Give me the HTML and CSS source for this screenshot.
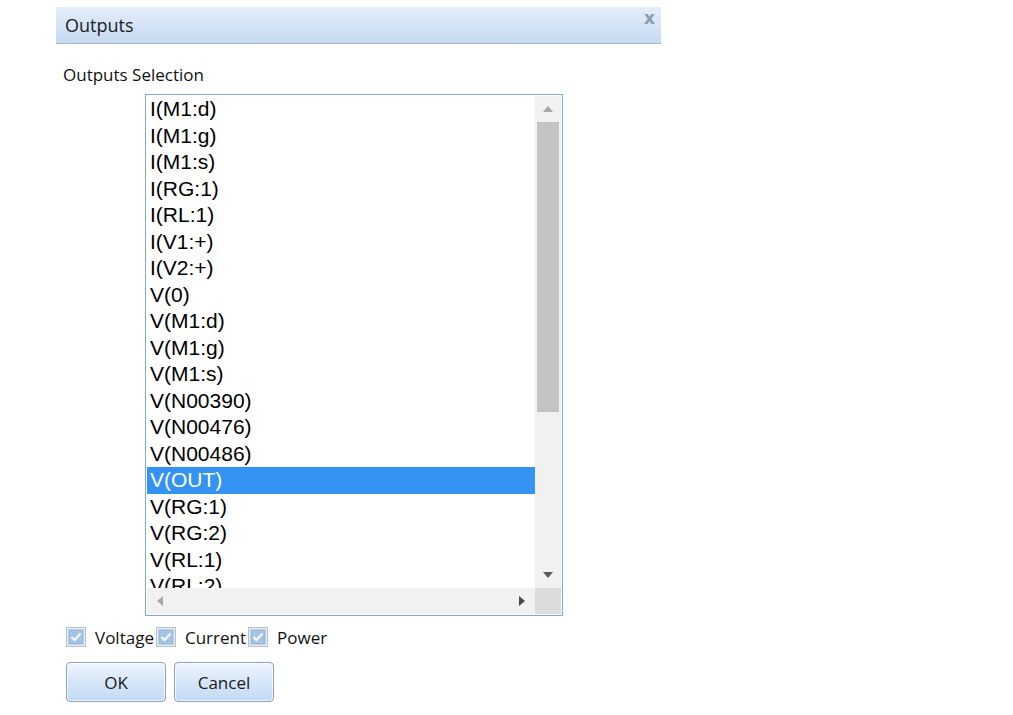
FILE: index.html
```html
<!DOCTYPE html>
<html>
<head>
<meta charset="utf-8">
<link rel="stylesheet" href="styles.css">
</head>
<body>
<div class="dialog">
  <div class="titlebar">
    <span class="title">Outputs</span>
    <span class="close">x</span>
  </div>
  <div class="content">
    <div class="label">Outputs Selection</div>
    <div class="listbox">
      <div class="items">
        <div class="item">I(M1:d)</div>
        <div class="item">I(M1:g)</div>
        <div class="item">I(M1:s)</div>
        <div class="item">I(RG:1)</div>
        <div class="item">I(RL:1)</div>
        <div class="item">I(V1:+)</div>
        <div class="item">I(V2:+)</div>
        <div class="item">V(0)</div>
        <div class="item">V(M1:d)</div>
        <div class="item">V(M1:g)</div>
        <div class="item">V(M1:s)</div>
        <div class="item">V(N00390)</div>
        <div class="item">V(N00476)</div>
        <div class="item">V(N00486)</div>
        <div class="item selected">V(OUT)</div>
        <div class="item">V(RG:1)</div>
        <div class="item">V(RG:2)</div>
        <div class="item">V(RL:1)</div>
        <div class="item">V(RL:2)</div>
      </div>
      <div class="vscroll">
        <div class="sbtn"><svg width="10" height="6" viewBox="0 0 10 6"><path d="M0 6 L5 0 L10 6 Z" fill="#a7a7a7"/></svg></div>
        <div class="vtrack"><div class="vthumb"></div></div>
        <div class="sbtn"><svg width="10" height="6" viewBox="0 0 10 6"><path d="M0 0 L5 6 L10 0 Z" fill="#5a5a5a"/></svg></div>
      </div>
      <div class="hscroll">
        <div class="sbtn"><svg width="6" height="10" viewBox="0 0 6 10"><path d="M6 0 L0 5 L6 10 Z" fill="#a7a7a7"/></svg></div>
        <div class="htrack"></div>
        <div class="sbtn"><svg width="6" height="10" viewBox="0 0 6 10"><path d="M0 0 L6 5 L0 10 Z" fill="#4a4a4a"/></svg></div>
      </div>
      <div class="corner"></div>
    </div>
    <div class="checks">
      <label class="check"><svg class="cb" width="20" height="20" viewBox="0 0 20 20"><rect x="0.5" y="0.5" width="19" height="19" fill="#e9eef4" stroke="#b4bfcc"/><rect x="3" y="3" width="14" height="14" fill="#a4c4e6" stroke="#8fb2d8"/><path d="M5.5 10 L8.5 13 L14.5 6.5" fill="none" stroke="#f4f8fc" stroke-width="2.4"/></svg><span>Voltage</span></label>
      <label class="check"><svg class="cb" width="20" height="20" viewBox="0 0 20 20"><rect x="0.5" y="0.5" width="19" height="19" fill="#e9eef4" stroke="#b4bfcc"/><rect x="3" y="3" width="14" height="14" fill="#a4c4e6" stroke="#8fb2d8"/><path d="M5.5 10 L8.5 13 L14.5 6.5" fill="none" stroke="#f4f8fc" stroke-width="2.4"/></svg><span>Current</span></label>
      <label class="check"><svg class="cb" width="20" height="20" viewBox="0 0 20 20"><rect x="0.5" y="0.5" width="19" height="19" fill="#e9eef4" stroke="#b4bfcc"/><rect x="3" y="3" width="14" height="14" fill="#a4c4e6" stroke="#8fb2d8"/><path d="M5.5 10 L8.5 13 L14.5 6.5" fill="none" stroke="#f4f8fc" stroke-width="2.4"/></svg><span>Power</span></label>
    </div>
    <div class="buttons">
      <button class="btn">OK</button>
      <button class="btn">Cancel</button>
    </div>
  </div>
</div>
</body>
</html>
```
FILE: styles.css
```css
html, body {
  margin: 0;
  padding: 0;
  background: #ffffff;
}
body {
  font-family: "Open Sans", "Noto Sans", sans-serif;
  color: #111;
}
.dialog {
  margin: 7px 0 0 56px;
  width: 605px;
}
.titlebar {
  height: 36px;
  border-bottom: 1px solid #a8b8cc;
  background: linear-gradient(#e4eefa, #c6daf2);
  display: flex;
  justify-content: space-between;
  align-items: center;
  padding: 0 6px 0 9px;
}
.title {
  font-size: 18px;
  color: #1b1b1b;
}
.close {
  font-family: "DejaVu Sans", sans-serif;
  font-weight: bold;
  font-size: 17px;
  line-height: 20px;
  color: #8d9caf;
  align-self: flex-start;
  margin-top: 1px;
}
.content {
  padding-left: 7px;
}
.label {
  font-size: 17px;
  line-height: 22px;
  margin-top: 20px;
}
.listbox {
  margin: 8px 0 0 82px;
  width: 414px;
  height: 518px;
  border: 1px solid #7fa8de;
  padding: 1px;
  display: grid;
  grid-template-columns: 388px 26px;
  grid-template-rows: 492px 26px;
  background: #fff;
}
.items {
  overflow: hidden;
  font-family: "Liberation Sans", Arial, sans-serif;
  font-size: 21px;
  color: #000;
}
.item {
  height: 26.5px;
  line-height: 26.5px;
  padding-left: 3px;
  white-space: nowrap;
}
.item.selected {
  background: #3392f2;
  color: #fff;
}
.vscroll {
  display: flex;
  flex-direction: column;
  background: #f1f1f1;
}
.sbtn {
  width: 26px;
  height: 26px;
  flex: none;
  display: flex;
  align-items: center;
  justify-content: center;
}
.vtrack {
  flex: 1;
  padding: 0 2px;
}
.vthumb {
  height: 290px;
  background: #c3c3c3;
}
.hscroll {
  display: flex;
  background: #f1f1f1;
}
.htrack {
  flex: 1;
}
.corner {
  background: #dcdcdc;
}
.checks {
  display: flex;
  gap: 2px;
  margin: 11px 0 0 3px;
  font-size: 17px;
}
.check {
  display: flex;
  align-items: center;
  gap: 9px;
  height: 20px;
}
.cb {
  display: block;
  flex: none;
}
.buttons {
  display: flex;
  gap: 8px;
  margin: 15px 0 0 3px;
}
.btn {
  width: 100px;
  height: 40px;
  border: 1px solid #8fa0b8;
  border-radius: 4px;
  background: linear-gradient(#eef5fd, #d6e6f8 50%, #c4daf3);
  font-family: "Open Sans", "Noto Sans", sans-serif;
  font-size: 17px;
  color: #1a1a1a;
  padding: 0;
  box-shadow: inset 0 0 0 1px rgba(255,255,255,0.7);
}
```
